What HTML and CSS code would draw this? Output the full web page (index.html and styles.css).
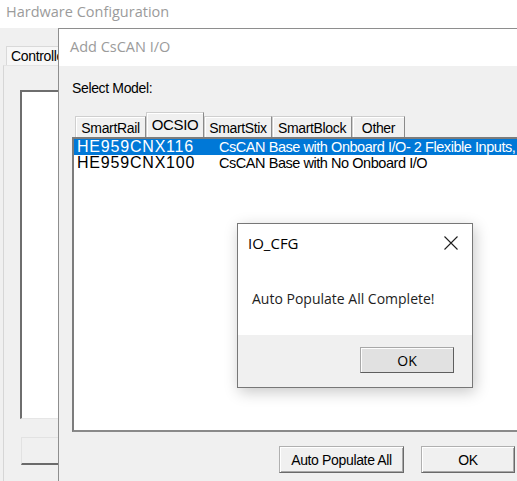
FILE: index.html
```html
<!DOCTYPE html>
<html>
<head>
<meta charset="utf-8">
<link rel="stylesheet" href="styles.css">
</head>
<body>
<div class="desk">
  <section class="win main">
    <header class="titlebar main-title">Hardware Configuration</header>
    <div class="main-body">
      <div class="main-tabs"><span class="main-tab">Controller</span></div>
      <div class="main-panel">
        <div class="main-list"></div>
        <div class="main-btn"></div>
      </div>
    </div>
  </section>

  <section class="win dlg">
    <header class="titlebar dlg-title">Add CsCAN I/O</header>
    <div class="dlg-body">
      <div class="label">Select Model:</div>
      <div class="tabs">
        <span class="tab">SmartRail</span>
        <span class="tab tab-sel">OCSIO</span>
        <span class="tab">SmartStix</span>
        <span class="tab">SmartBlock</span>
        <span class="tab">Other</span>
      </div>
      <div class="list">
        <div class="row row-sel"><span class="code">HE959CNX116</span><span class="desc">CsCAN Base with Onboard I/O- 2 Flexible Inputs, 2 Flexible Outputs</span></div>
        <div class="row"><span class="code">HE959CNX100</span><span class="desc">CsCAN Base with No Onboard I/O</span></div>
      </div>
      <div class="footer">
        <button class="btn btn-auto">Auto Populate All</button>
        <button class="btn btn-ok">OK</button>
      </div>
    </div>
  </section>

  <section class="msg">
    <header class="msg-title">
      <span>IO_CFG</span>
      <svg class="msg-close" width="14" height="14" viewBox="0 0 14 14"><path d="M0.5 0.5 L13.5 13.5 M13.5 0.5 L0.5 13.5" stroke="#1e1e1e" stroke-width="1.1" fill="none"/></svg>
    </header>
    <div class="msg-text">Auto Populate All Complete!</div>
    <div class="msg-footer">
      <button class="msg-btn">OK</button>
    </div>
  </section>
</div>
</body>
</html>
```
FILE: styles.css
```css
* { box-sizing: border-box; }
html, body { margin: 0; padding: 0; }
body { width: 517px; height: 481px; overflow: hidden; background: #f0f0f0; }
.desk { position: relative; width: 517px; height: 481px; overflow: hidden; }

.win { position: absolute; background: #f0f0f0; }
.titlebar {
  background: #fff;
  font-family: "Open Sans", "Noto Sans", sans-serif;
  font-size: 14.5px;
  color: #9b9b9b;
}

/* background window */
.main { left: 0; top: 0; width: 517px; height: 481px; }
.main-title { height: 28px; line-height: 24px; padding-left: 6px; }
.main-body { padding: 18px 0 0 3px; }
.main-tabs { display: flex; padding-left: 3px; }
.main-tab {
  height: 19px;
  width: 70px;
  padding: 1px 0 0 4px;
  background: #f7f7f7;
  border: 1px solid #d9d9d9;
  border-bottom: none;
  font-family: "Liberation Sans", Arial, sans-serif;
  font-size: 14px;
  letter-spacing: -0.35px;
  color: #000;
  overflow: hidden;
}
.main-panel {
  border-left: 1px solid #d6d6d6;
  border-top: 1px solid #e4e4e4;
  padding: 24px 0 0 16px;
  height: 420px;
}
.main-list {
  height: 329px;
  background: #fff;
  border-top: 2px solid #6e6e6e;
  border-left: 2px solid #6e6e6e;
  border-bottom: 1px solid #e6e6e6;
}
.main-btn {
  margin-top: 18px;
  height: 28px;
  width: 60px;
  margin-left: 1px;
  border: 1px solid #e2e2e2;
  border-bottom: 2px solid #6a6a6a;
  background: #f0f0f0;
}

/* Add CsCAN I/O dialog */
.dlg {
  left: 58px; top: 28px; width: 480px; height: 470px;
  border: 1px solid #8e8e8e;
}
.dlg-title { height: 37px; line-height: 36px; padding-left: 11px; }
.dlg-body {
  padding: 14px 0 0 13px;
  font-family: "Liberation Sans", Arial, sans-serif;
  font-size: 14px;
  letter-spacing: -0.35px;
  color: #000;
}
.label { height: 16px; line-height: 16px; }
.tabs { display: flex; align-items: flex-end; height: 25px; margin-top: 16px; padding-left: 3px; }
.tab {
  height: 21px;
  padding-top: 3px;
  text-align: center;
  line-height: 16px;
  background: #f0f0f0;
  border: 1px solid #cfcfcf;
  border-right-color: #8a8a8a;
  border-bottom: none;
  box-shadow: inset 1px 1px #ffffff;
}
.tab:nth-child(1) { width: 71px; }
.tab:nth-child(2) { width: 58px; }
.tab:nth-child(3) { width: 68px; }
.tab:nth-child(4) { width: 80px; }
.tab:nth-child(5) { width: 53px; }
.tab-sel { height: 25px; padding-top: 4px; font-size: 15px; }

.list {
  height: 295px;
  width: 470px;
  background: #fff;
  border-top: 2px solid #7c7c7c;
  border-left: 2px solid #7c7c7c;
  border-bottom: 2px solid #8a8a8a;
  overflow: hidden;
}
.row {
  display: grid;
  grid-template-columns: 142px max-content;
  height: 16px;
  line-height: 16px;
  padding-left: 3px;
  white-space: nowrap;
}
.row-sel { background: #0078d7; color: #fff; }
.code { font-size: 16px; letter-spacing: 0.8px; }
.desc { font-size: 14.5px; letter-spacing: -0.45px; }

.footer { display: flex; gap: 17px; margin-top: 14px; padding-left: 207px; }
.btn {
  height: 27px;
  margin: 0;
  padding: 0;
  background: #f0f0f0;
  border: 1px solid #b0b0b0;
  border-right-color: #6a6a6a;
  border-bottom-color: #6a6a6a;
  box-shadow: inset 1px 1px #ffffff, inset -1px -1px #a8a8a8;
  font-family: "Liberation Sans", Arial, sans-serif;
  font-size: 14px;
  letter-spacing: -0.35px;
  color: #000;
}
.btn-auto { width: 125px; }
.btn-ok { width: 94px; }

/* message box */
.msg {
  position: absolute;
  left: 237px; top: 223px; width: 236px; height: 165px;
  background: #fff;
  border: 1px solid #777;
  box-shadow: 2px 4px 14px rgba(0,0,0,0.22);
  display: flex;
  flex-direction: column;
  font-family: "Open Sans", "Noto Sans", sans-serif;
}
.msg-title {
  display: flex;
  justify-content: space-between;
  align-items: center;
  height: 38px;
  padding: 0 14px 0 10px;
  font-size: 15px;
  color: #000;
}
.msg-close { display: block; }
.msg-text {
  flex: 1;
  padding: 27px 0 0 14px;
  font-size: 14px;
  color: #1e1e1e;
}
.msg-footer {
  height: 52px;
  background: #f0f0f0;
  display: flex;
  justify-content: flex-end;
  padding: 12px 18px 0 0;
}
.msg-btn {
  width: 94px;
  height: 26px;
  margin: 0;
  padding: 0;
  background: #e1e1e1;
  border: 1px solid #a8a8a8;
  border-right-color: #5e5e5e;
  border-bottom-color: #5e5e5e;
  box-shadow: inset 1px 1px #fdfdfd;
  font-family: "Open Sans", "Noto Sans", sans-serif;
  font-size: 14px;
  color: #000;
}
```
